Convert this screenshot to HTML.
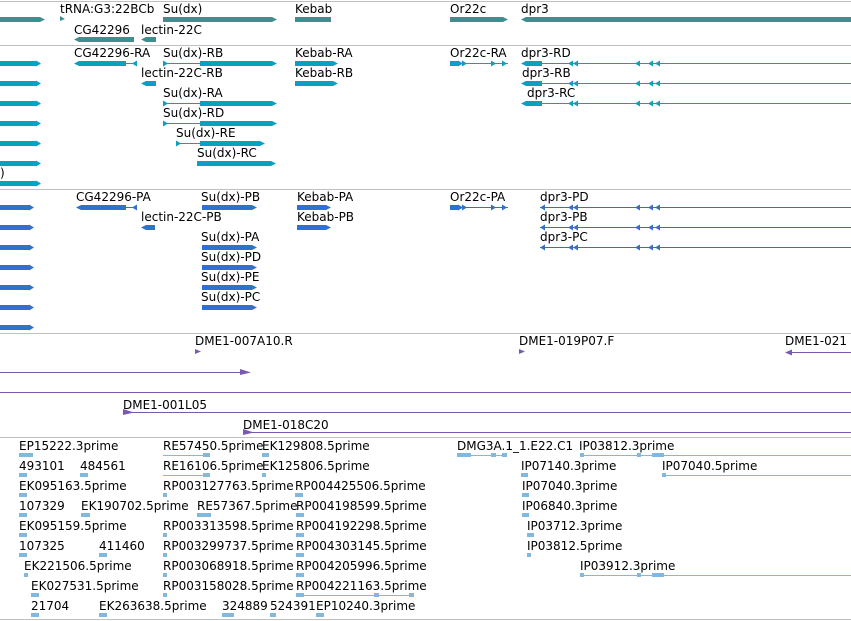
<!DOCTYPE html>
<html><head><meta charset="utf-8"><style>
html,body{margin:0;padding:0;background:#fff;width:851px;height:621px;overflow:hidden}
svg{display:block}
text{font-family:"DejaVu Sans","Liberation Sans",sans-serif;font-size:12px;fill:#000}
</style></head><body>
<svg width="851" height="621" xmlns="http://www.w3.org/2000/svg">
<!-- separators -->
<g stroke="#c0c0c0" stroke-width="1">
<line x1="0" y1="1.5" x2="851" y2="1.5"/><line x1="0" y1="45.5" x2="851" y2="45.5"/>
<line x1="0" y1="189.5" x2="851" y2="189.5"/><line x1="0" y1="333.5" x2="851" y2="333.5"/>
<line x1="0" y1="437.5" x2="851" y2="437.5"/><line x1="0" y1="619.5" x2="851" y2="619.5"/>
</g>
<!-- genes -->
<g fill="#3f8f91">
<polygon points="0,17 40,17 45,19.5 40,22 0,22"/>
<polygon points="60,16 65,19 60,21"/>
<polygon points="163,17 272,17 277,19.5 272,22 163,22"/>
<rect x="295" y="17" width="36" height="5"/>
<polygon points="450,17 503,17 508,19.5 503,22 450,22"/>
<polygon points="521,19.5 526,17 851,17 851,22 526,22"/>
<polygon points="74,39.5 79,37 134,37 134,42 79,42"/>
<polygon points="141,39.5 146,37 156,37 156,42 146,42"/>
</g>
<text x="60" y="13">tRNA:G3:22BCb</text><text x="163" y="13">Su(dx)</text><text x="295" y="13">Kebab</text>
<text x="450" y="13">Or22c</text><text x="521" y="13">dpr3</text>
<text x="74" y="34">CG42296</text><text x="141" y="34">lectin-22C</text>
<!-- transcripts -->
<g fill="#0aa0c4" stroke="none">
<g id="lt"><rect x="0" y="61" width="36" height="5"/><polygon points="36,60.5 41,63.5 36,66.5"/></g>
<use href="#lt" y="20"/><use href="#lt" y="40"/><use href="#lt" y="60"/><use href="#lt" y="80"/><use href="#lt" y="100"/><use href="#lt" y="120"/>
<polygon points="74,63.5 79,61 126,61 126,66 79,66"/><rect x="126" y="63" width="10" height="1"/><polygon points="132,63.5 137,60.5 137,66.5"/>
<g id="sdx"><rect x="163" y="63" width="37" height="1"/><polygon points="163,60.5 168,63.5 163,66.5"/><polygon points="200,61 272,61 277,63.5 272,66 200,66"/></g>
<use href="#sdx" y="40"/><use href="#sdx" y="60"/>
<rect x="176" y="143" width="24" height="1"/><polygon points="176,140.5 181,143.5 176,146.5"/><polygon points="200,141 260,141 265,143.5 260,146 200,146"/>
<polygon points="197,161 271,161 276,163.5 271,166 197,166"/>
<polygon points="295,61 333,61 338,63.5 333,66 295,66"/><polygon points="295,81 333,81 338,83.5 333,86 295,86"/>
<polygon points="141,83.5 146,81 156,81 156,86 146,86"/>
<rect x="450" y="61" width="8" height="5"/><rect x="450" y="63" width="58" height="1"/>
<polygon points="458,60.5 463,63.5 458,66.5"/><polygon points="462,60.5 467,63.5 462,66.5"/><polygon points="491,60.5 496,63.5 491,66.5"/><polygon points="502,60.5 507,63.5 502,66.5"/>
<g id="dpr"><polygon points="521,63.5 526,61 542,61 542,66 526,66"/><rect x="542" y="63" width="309" height="1"/><polygon points="573,60.5 568,63.5 573,66.5"/><polygon points="578,60.5 573,63.5 578,66.5"/><polygon points="640,60.5 635,63.5 640,66.5"/><polygon points="653,60.5 648,63.5 653,66.5"/><polygon points="660,60.5 655,63.5 660,66.5"/></g>
<use href="#dpr" y="20"/><use href="#dpr" y="40"/>
</g>
<text x="0" y="177">)</text>
<text x="74" y="57">CG42296-RA</text><text x="163" y="57">Su(dx)-RB</text><text x="295" y="57">Kebab-RA</text><text x="450" y="57">Or22c-RA</text><text x="521" y="57">dpr3-RD</text>
<text x="141" y="77">lectin-22C-RB</text><text x="295" y="77">Kebab-RB</text><text x="522" y="77">dpr3-RB</text>
<text x="163" y="97">Su(dx)-RA</text><text x="527" y="97">dpr3-RC</text>
<text x="163" y="117">Su(dx)-RD</text><text x="176" y="137">Su(dx)-RE</text><text x="197" y="157">Su(dx)-RC</text>
<!-- proteins -->
<g fill="#3070d0">
<g id="lp"><rect x="0" y="205" width="30" height="5"/><polygon points="29,204.5 34,207.5 29,210.5"/></g>
<use href="#lp" y="20"/><use href="#lp" y="40"/><use href="#lp" y="60"/><use href="#lp" y="80"/><use href="#lp" y="100"/><use href="#lp" y="120"/>
<polygon points="76,207.5 81,205 126,205 126,210 81,210"/><rect x="126" y="207" width="10" height="1"/><polygon points="132,207.5 137,204.5 137,210.5"/>
<g id="sp"><polygon points="202,205 252,205 257,207.5 252,210 202,210"/></g>
<use href="#sp" y="40"/><use href="#sp" y="60"/><use href="#sp" y="80"/><use href="#sp" y="100"/>
<polygon points="297,205 326,205 331,207.5 326,210 297,210"/><polygon points="297,225 326,225 331,227.5 326,230 297,230"/>
<polygon points="141,227.5 146,225 155,225 155,230 146,230"/>
<rect x="450" y="205" width="8" height="5"/><rect x="450" y="207" width="58" height="1"/>
<polygon points="458,204.5 463,207.5 458,210.5"/><polygon points="462,204.5 467,207.5 462,210.5"/><polygon points="491,204.5 496,207.5 491,210.5"/><polygon points="502,204.5 507,207.5 502,210.5"/>
<g id="dp"><rect x="540" y="207" width="311" height="1"/><polygon points="545,204.5 540,207.5 545,210.5"/><polygon points="573,204.5 568,207.5 573,210.5"/><polygon points="578,204.5 573,207.5 578,210.5"/><polygon points="640,204.5 635,207.5 640,210.5"/><polygon points="653,204.5 648,207.5 653,210.5"/><polygon points="660,204.5 655,207.5 660,210.5"/></g>
<use href="#dp" y="20"/><use href="#dp" y="40"/>
</g>
<text x="76" y="201">CG42296-PA</text><text x="201" y="201">Su(dx)-PB</text><text x="297" y="201">Kebab-PA</text><text x="450" y="201">Or22c-PA</text><text x="540" y="201">dpr3-PD</text>
<text x="141" y="221">lectin-22C-PB</text><text x="297" y="221">Kebab-PB</text><text x="540" y="221">dpr3-PB</text>
<text x="201" y="241">Su(dx)-PA</text><text x="540" y="241">dpr3-PC</text>
<text x="201" y="261">Su(dx)-PD</text><text x="201" y="281">Su(dx)-PE</text><text x="201" y="301">Su(dx)-PC</text>
<!-- clones -->
<g fill="#7a5ab0">
<polygon points="195,349 201,351.5 195,354"/><polygon points="519,349 525,351.5 519,354"/>
<polygon points="785,352.5 792,349.5 792,355.5"/><rect x="790" y="352" width="61" height="1"/>
<rect x="0" y="372" width="245" height="1"/><polygon points="240,369 251,372.5 240,375"/>
<rect x="0" y="392" width="851" height="1"/>
<rect x="123" y="412" width="728" height="1"/><polygon points="123,409 134,412.5 123,415"/>
<rect x="243" y="432" width="608" height="1"/><polygon points="243,429 254,432.5 243,435"/>
</g>
<text x="195" y="345">DME1-007A10.R</text><text x="519" y="345">DME1-019P07.F</text><text x="785" y="345">DME1-021</text>
<text x="123" y="409">DME1-001L05</text><text x="243" y="429">DME1-018C20</text>
<!-- ESTs -->
<g fill="#80b8e0">
<rect x="19" y="453" width="14" height="4"/><rect x="163" y="455" width="45" height="1"/><rect x="203" y="453" width="7" height="4"/><rect x="262" y="453" width="7" height="4"/>
<rect x="457" y="453" width="14" height="4"/><rect x="457" y="455" width="50" height="1"/><rect x="491" y="453" width="5" height="4"/><rect x="502" y="453" width="5" height="4"/>
<rect x="580" y="455" width="271" height="1"/><rect x="580" y="453" width="4" height="4"/><rect x="637" y="453" width="4" height="4"/><rect x="652" y="453" width="12" height="4"/>
<rect x="19" y="473" width="8" height="4"/><rect x="80" y="473" width="8" height="4"/><rect x="163" y="475" width="45" height="1"/><rect x="203" y="473" width="7" height="4"/><rect x="262" y="473" width="4" height="4"/>
<rect x="521" y="473" width="7" height="4"/><rect x="662" y="475" width="189" height="1"/><rect x="662" y="473" width="4" height="4"/>
<rect x="19" y="493" width="8" height="4"/><rect x="163" y="493" width="4" height="4"/><rect x="295" y="493" width="8" height="4"/><rect x="522" y="493" width="7" height="4"/>
<rect x="19" y="513" width="8" height="4"/><rect x="81" y="513" width="9" height="4"/><rect x="197" y="513" width="14" height="4"/><rect x="296" y="513" width="8" height="4"/><rect x="522" y="513" width="7" height="4"/>
<rect x="19" y="533" width="8" height="4"/><rect x="163" y="533" width="4" height="4"/><rect x="296" y="533" width="8" height="4"/><rect x="527" y="533" width="7" height="4"/>
<rect x="19" y="553" width="8" height="4"/><rect x="99" y="553" width="8" height="4"/><rect x="163" y="553" width="4" height="4"/><rect x="296" y="553" width="8" height="4"/><rect x="527" y="553" width="4" height="4"/>
<rect x="24" y="573" width="4" height="4"/><rect x="163" y="573" width="4" height="4"/><rect x="296" y="573" width="8" height="4"/>
<rect x="580" y="575" width="271" height="1"/><rect x="580" y="573" width="4" height="4"/><rect x="637" y="573" width="4" height="4"/><rect x="652" y="573" width="12" height="4"/>
<rect x="31" y="593" width="8" height="4"/><rect x="163" y="593" width="4" height="4"/><rect x="296" y="595" width="118" height="1"/><rect x="296" y="593" width="8" height="4"/><rect x="374" y="593" width="5" height="4"/><rect x="409" y="593" width="5" height="4"/>
<rect x="31" y="613" width="8" height="4"/><rect x="99" y="613" width="8" height="4"/><rect x="222" y="613" width="12" height="4"/><rect x="270" y="613" width="6" height="4"/><rect x="316" y="613" width="8" height="4"/>
</g>
<text x="19" y="450">EP15222.3prime</text><text x="163" y="450">RE57450.5prime</text><text x="262" y="450">EK129808.5prime</text><text x="457" y="450">DMG3A.1_1.E22.C1</text><text x="579" y="450">IP03812.3prime</text>
<text x="19" y="470">493101</text><text x="80" y="470">484561</text><text x="163" y="470">RE16106.5prime</text><text x="262" y="470">EK125806.5prime</text><text x="521" y="470">IP07140.3prime</text><text x="662" y="470">IP07040.5prime</text>
<text x="19" y="490">EK095163.5prime</text><text x="163" y="490">RP003127763.5prime</text><text x="295" y="490">RP004425506.5prime</text><text x="522" y="490">IP07040.3prime</text>
<text x="19" y="510">107329</text><text x="81" y="510">EK190702.5prime</text><text x="197" y="510">RE57367.5prime</text><text x="296" y="510">RP004198599.5prime</text><text x="522" y="510">IP06840.3prime</text>
<text x="19" y="530">EK095159.5prime</text><text x="163" y="530">RP003313598.5prime</text><text x="296" y="530">RP004192298.5prime</text><text x="527" y="530">IP03712.3prime</text>
<text x="19" y="550">107325</text><text x="99" y="550">411460</text><text x="163" y="550">RP003299737.5prime</text><text x="296" y="550">RP004303145.5prime</text><text x="527" y="550">IP03812.5prime</text>
<text x="24" y="570">EK221506.5prime</text><text x="163" y="570">RP003068918.5prime</text><text x="296" y="570">RP004205996.5prime</text><text x="580" y="570">IP03912.3prime</text>
<text x="31" y="590">EK027531.5prime</text><text x="163" y="590">RP003158028.5prime</text><text x="296" y="590">RP004221163.5prime</text>
<text x="31" y="610">21704</text><text x="99" y="610">EK263638.5prime</text><text x="222" y="610">324889</text><text x="270" y="610">524391</text><text x="316" y="610">EP10240.3prime</text>
</svg>
</body></html>
